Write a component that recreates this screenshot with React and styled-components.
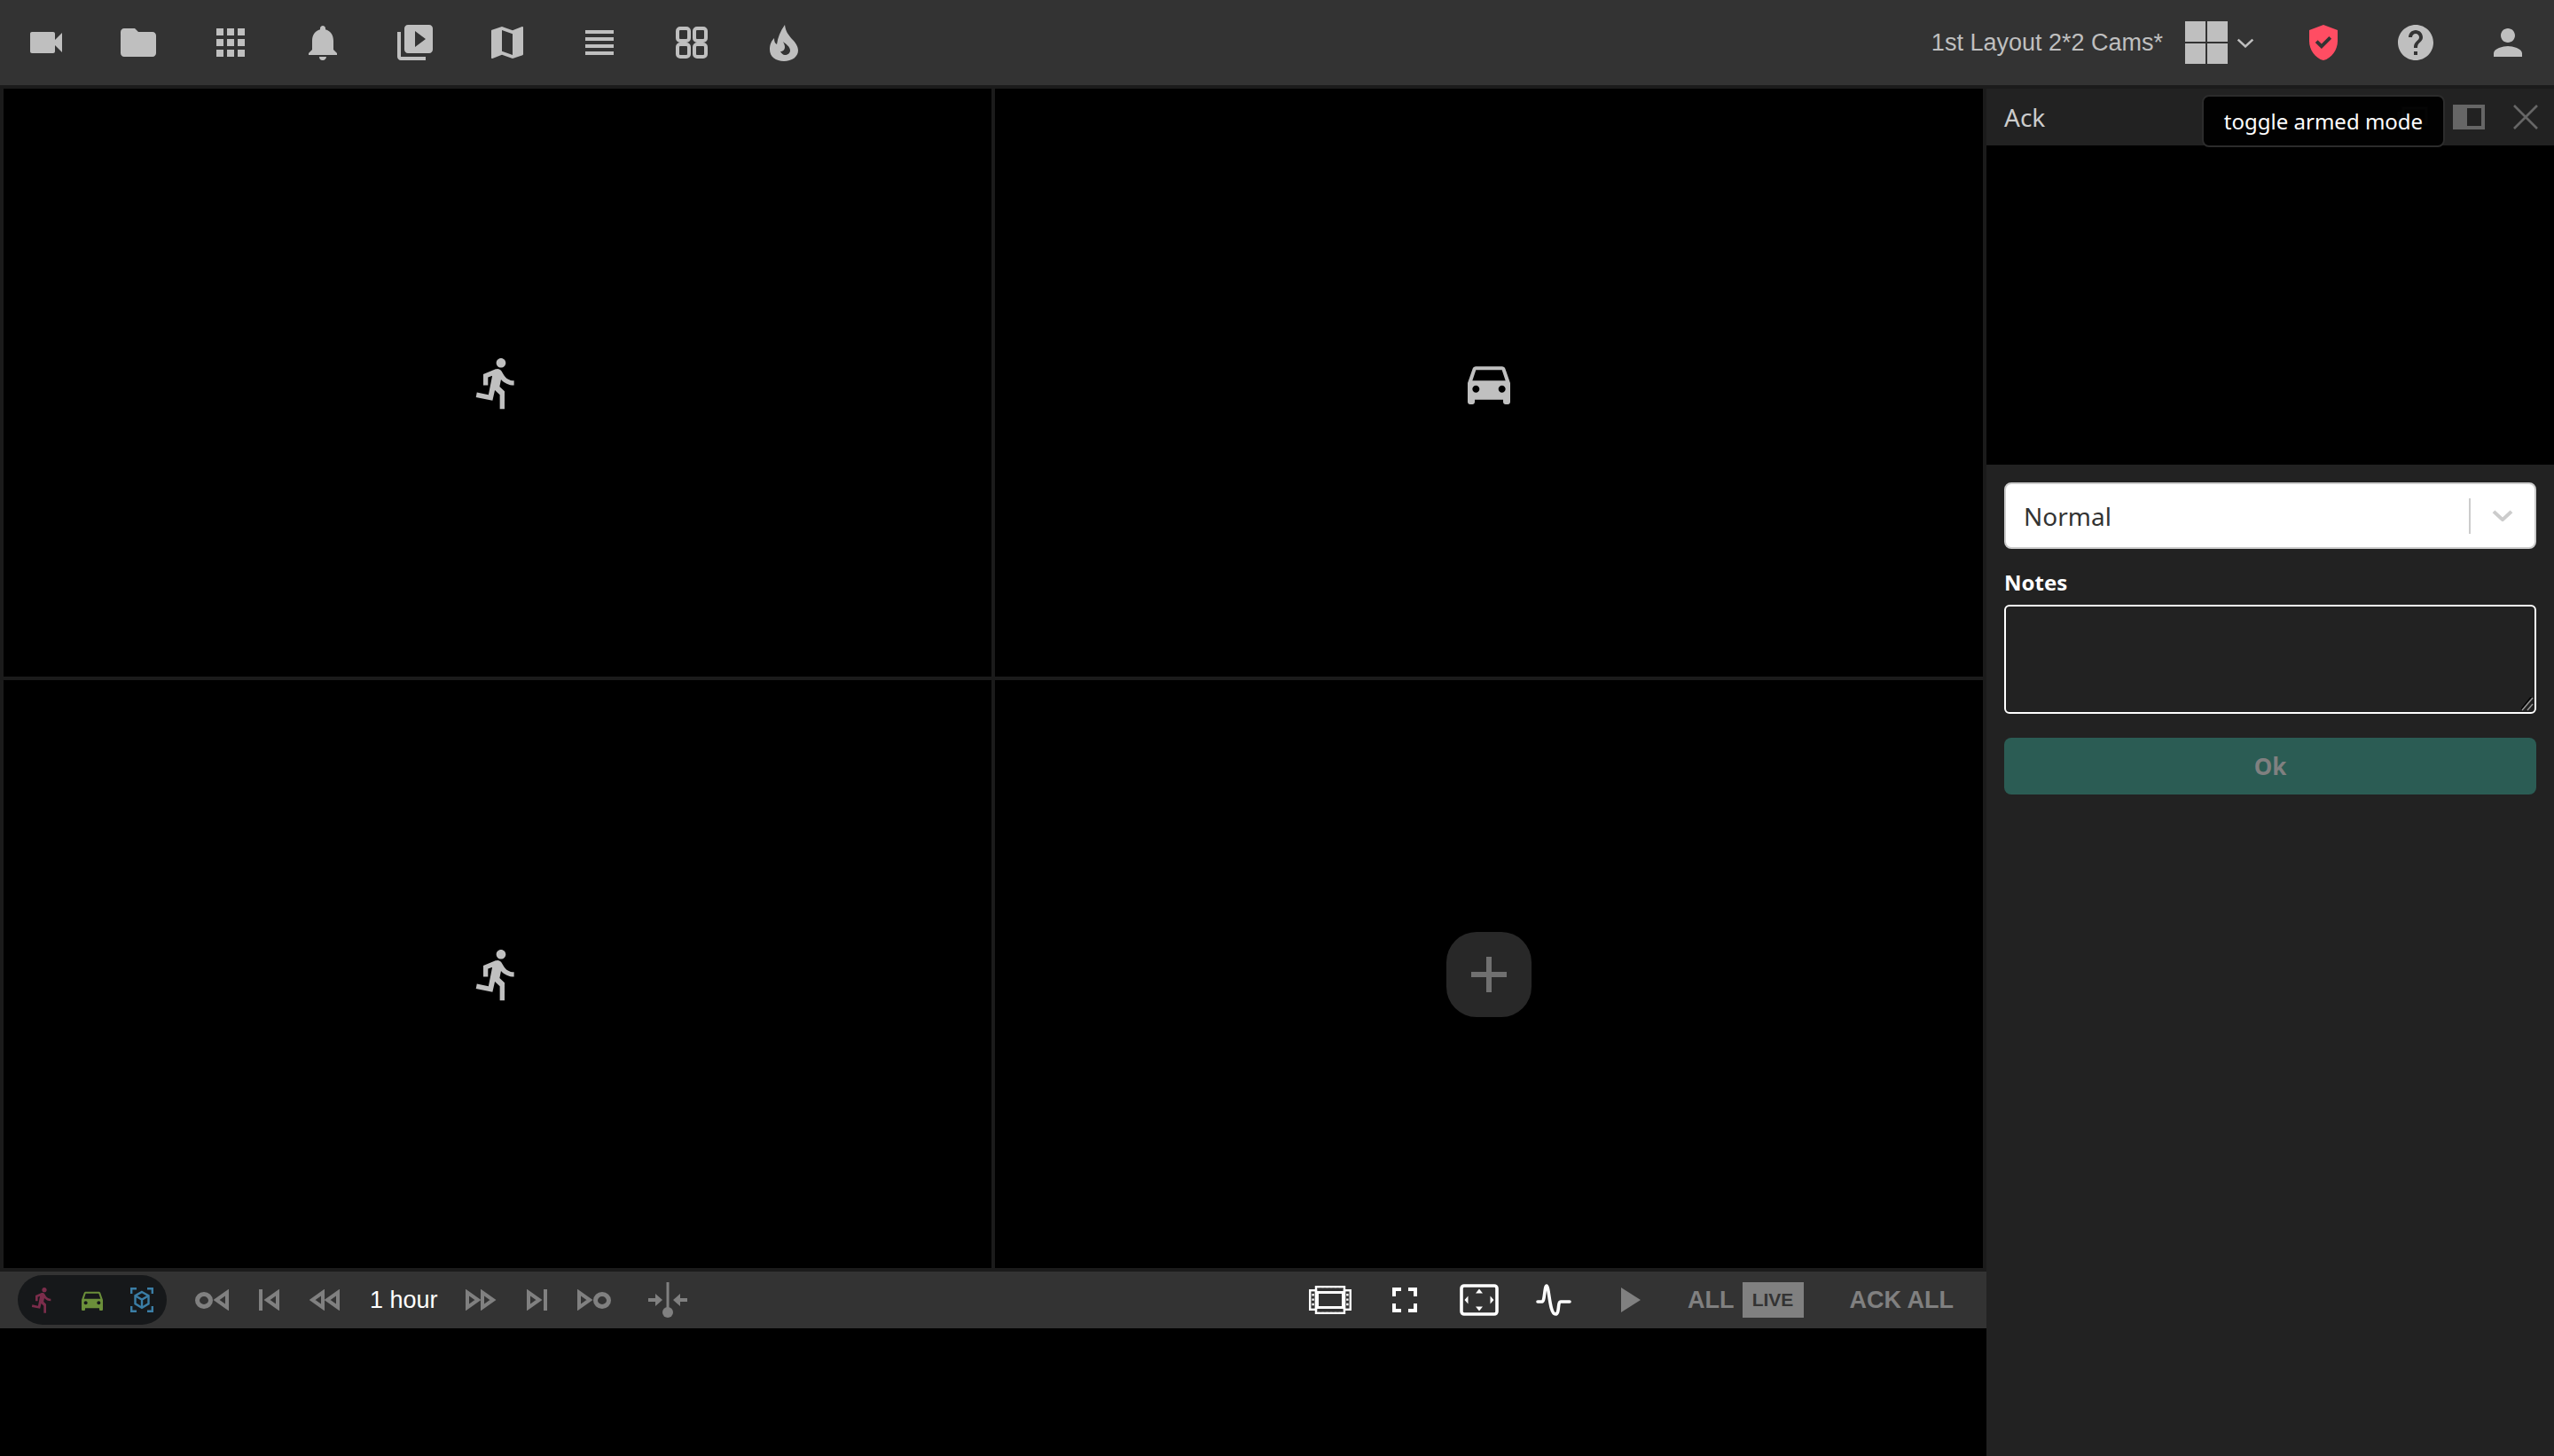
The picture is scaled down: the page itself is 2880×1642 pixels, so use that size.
import React from "react";
import styled, { createGlobalStyle } from "styled-components";
import {
  MdVideocam, MdFolder, MdApps, MdNotifications, MdVideoLibrary, MdMap,
  MdViewHeadline, MdGppGood, MdHelp, MdPerson, MdDirectionsRun, MdDirectionsCar,
} from "react-icons/md";

const Global = createGlobalStyle`
  html, body { margin: 0; padding: 0; height: 100%; background: #000; }
  #root { height: 100vh; }
  * { box-sizing: border-box; }
`;

const Page = styled.div`
  height: 100vh; display: flex; flex-direction: column; overflow: hidden;
  font-family: "Liberation Sans", Arial, sans-serif;
`;
const Toolbar = styled.header`
  height: 96px; flex: none; display: flex; align-items: center; background: #333; color: #bfbfbf;
`;
const ToolSlot = styled.div`
  width: 104px; height: 96px; flex: none; display: flex; align-items: center; justify-content: center;
`;
const ToolRight = styled.div`
  margin-left: auto; display: flex; align-items: center;
`;
const LayoutName = styled.span`
  font-size: 27px; color: #bfbfbf; white-space: nowrap; margin-right: 25px;
`;
const LayoutGlyph = styled.div`
  width: 48px; height: 48px; display: grid; gap: 2px; grid-template-columns: 1fr 1fr; grid-template-rows: 1fr 1fr;
  span { background: #bfbfbf; }
`;
const Caret = styled.svg`
  margin: 0 26px 0 10px; display: block; color: #bfbfbf;
`;
const Main = styled.div`
  flex: 1; min-height: 0; display: flex; padding-top: 4px; background: #1b1b1b;
`;
const Workspace = styled.div`
  width: 2240px; flex: none; display: flex; flex-direction: column; background: #000;
`;
const CameraGrid = styled.div`
  height: 1334px; flex: none; display: grid; grid-template-columns: 1fr 1fr; grid-template-rows: 1fr 1fr;
  gap: 4px; padding: 0 4px 4px; background: #1b1b1b;
`;
const Cell = styled.div`
  background: #000; color: #c0c0c0; display: flex; align-items: center; justify-content: center;
`;
const AddButton = styled.div`
  width: 96px; height: 96px; border-radius: 34px; background: #282828; color: #707070;
  display: flex; align-items: center; justify-content: center;
`;
const ControlBar = styled.div`
  height: 64px; flex: none; background: #333; display: flex; align-items: center; padding: 0 37px 0 20px; color: #808080;
`;
const FilterPill = styled.div`
  width: 168px; height: 56px; border-radius: 28px; background: #16181a; display: flex; align-items: center; flex: none;
`;
const FilterSlot = styled.div`
  width: 56px; display: flex; align-items: center; justify-content: center; color: ${p => p.$color};
`;
const Transport = styled.div`
  display: flex; align-items: center; gap: 34px; margin-left: 32px;
`;
const HourLabel = styled.span`
  color: #fff; font-size: 27px; white-space: nowrap; margin-right: -3px;
`;
const SyncSlot = styled.div`
  margin-left: 8px; display: flex;
`;
const Actions = styled.div`
  margin-left: auto; display: flex; align-items: center;
`;
const ActionItem = styled.div`
  margin-left: ${p => p.$gap}px; color: ${p => p.$color || "#808080"}; display: flex; align-items: center;
`;
const BoldLabel = styled.span`
  font-size: 27px; font-weight: 700; color: #808080; white-space: nowrap;
`;
const LiveBadge = styled.span`
  width: 69px; height: 40px; margin-left: 9px; background: #808080; color: #333; font-size: 21px; font-weight: 700;
  display: flex; align-items: center; justify-content: center;
`;
const Fill = styled.div`
  flex: 1; background: #000;
`;
const SidePanel = styled.aside`
  width: 640px; flex: none; background: #222; display: flex; flex-direction: column;
  font-family: "Noto Sans", sans-serif;
`;
const PanelHeader = styled.div`
  position: relative; height: 64px; flex: none; padding: 0 18px 0 20px; display: flex; align-items: center; color: #666;
`;
const PanelTitle = styled.span`
  font-size: 28px; color: #ccc; margin-right: auto;
`;
const HeaderIcon = styled.svg`
  display: block; margin-left: ${p => p.$gap}px; flex: none;
`;
const Tooltip = styled.div`
  position: absolute; left: 243px; top: 7px; width: 274px; height: 59px; border-radius: 8px;
  background: rgba(0, 0, 0, 0.95); border: 2px solid #2c2c2c; color: #fff; font-size: 24px;
  display: flex; align-items: center; justify-content: center; white-space: nowrap;
`;
const PreviewArea = styled.div`
  height: 360px; flex: none; background: #000;
`;
const Form = styled.div`
  padding: 20px 20px 0; display: flex; flex-direction: column;
`;
const SelectBox = styled.div`
  height: 75px; background: #fff; border: 2px solid #ccc; border-radius: 8px; display: flex; align-items: center;
  padding-left: 20px; color: #333; font-size: 28px;
`;
const SelectValue = styled.span`
  flex: 1;
`;
const SelectDivider = styled.span`
  width: 2px; height: 40px; background: #ccc;
`;
const SelectCaret = styled.svg`
  margin: 0 24px; display: block; color: #ccc;
`;
const FieldLabel = styled.label`
  margin-top: 18px; color: #fff; font-size: 24px; font-weight: 700; line-height: 39px; height: 45px;
`;
const NotesWrap = styled.div`
  position: relative; height: 123px;
`;
const NotesInput = styled.textarea`
  display: block; width: 100%; height: 100%; background: #222; border: 2px solid #fff; border-radius: 6px; outline: none; color: #fff;
  font-family: inherit; resize: none; padding: 8px;
`;
const ResizeGrip = styled.svg`
  position: absolute; right: 3px; bottom: 3px; display: block;
`;
const OkButton = styled.button`
  margin-top: 27px; height: 64px; border: 0; border-radius: 8px; background: #2b5c54; color: #808080;
  font-family: inherit; font-size: 26px; font-weight: 700; display: flex; align-items: center; justify-content: center;
`;
const Glyph = styled.svg`
  display: block; flex: none;
`;

const RoundMark = () => (
  <Glyph width="38" height="24" viewBox="0 0 38 24" fill="none" stroke="currentColor">
    <ellipse cx="10" cy="12.5" rx="7.5" ry="7" strokeWidth="5" />
    <path d="M36 3.5V20.5L24 12Z" strokeWidth="4" />
  </Glyph>
);
const BarPrev = () => (
  <Glyph width="23" height="24" viewBox="0 0 23 24" fill="none" stroke="currentColor">
    <path d="M2 0V24" strokeWidth="4" />
    <path d="M21 3.5V20.5L9 12Z" strokeWidth="4" />
  </Glyph>
);
const DoublePrev = () => (
  <Glyph width="34" height="24" viewBox="0 0 34 24" fill="none" stroke="currentColor" strokeWidth="4">
    <path d="M15 3.5V20.5L3 12Z" />
    <path d="M32 3.5V20.5L20 12Z" />
  </Glyph>
);
const DoubleNext = () => (
  <Glyph width="35" height="24" viewBox="0 0 35 24" fill="none" stroke="currentColor" strokeWidth="4">
    <path d="M2 3.5V20.5L14 12Z" />
    <path d="M19 3.5V20.5L31 12Z" />
  </Glyph>
);
const BarNext = () => (
  <Glyph width="23" height="24" viewBox="0 0 23 24" fill="none" stroke="currentColor">
    <path d="M2 3.5V20.5L14 12Z" strokeWidth="4" />
    <path d="M21 0V24" strokeWidth="4" />
  </Glyph>
);
const NextRound = () => (
  <Glyph width="38" height="24" viewBox="0 0 38 24" fill="none" stroke="currentColor">
    <path d="M2 3.5V20.5L14 12Z" strokeWidth="4" />
    <ellipse cx="28" cy="12.5" rx="7.5" ry="7" strokeWidth="5" />
  </Glyph>
);
const SyncMark = () => (
  <Glyph width="44" height="40" viewBox="0 0 44 40" fill="currentColor">
    <rect x="20.5" y="0" width="3" height="34" />
    <circle cx="22" cy="34" r="6" />
    <path d="M0 18H8V13L16 20L8 27V22H0Z" />
    <path d="M44 18H36V13L28 20L36 27V22H44Z" />
  </Glyph>
);
const CubeMark = () => (
  <Glyph width="26" height="28" viewBox="0 0 26 28" fill="none" stroke="currentColor" strokeWidth="2.4">
    <path d="M1.2 7V1.2H7M19 1.2H24.8V7M24.8 21V26.8H19M7 26.8H1.2V21" />
    <path d="M13 5L20.5 9.2V18.4L13 22.8L5.5 18.4V9.2Z" />
    <path d="M5.5 9.2L13 13.6L20.5 9.2M13 13.6V22.8" />
  </Glyph>
);
const FilmMark = () => (
  <Glyph width="48" height="32" viewBox="0 0 48 32" fill="none" stroke="#fff">
    <rect x="8" y="1.2" width="32" height="29.6" strokeWidth="2.4" />
    <rect x="9.5" y="7.5" width="29" height="17" strokeWidth="3" />
    <rect x="1.2" y="5.2" width="6.8" height="21.6" strokeWidth="2.4" />
    <rect x="40" y="5.2" width="6.8" height="21.6" strokeWidth="2.4" />
    <path d="M12 4H36M12 28H36" strokeWidth="2.4" strokeDasharray="2.4 2.4" stroke="#333" />
    <path d="M4.6 9V23M43.4 9V23" strokeWidth="2.4" strokeDasharray="2.4 3" stroke="#fff" />
  </Glyph>
);
const FullscreenMark = () => (
  <Glyph width="28" height="28" viewBox="0 0 28 28" fill="none" stroke="#fff" strokeWidth="4">
    <path d="M2 10V2H10M18 2H26V10M26 18V26H18M10 26H2V18" />
  </Glyph>
);
const AspectMark = () => (
  <Glyph width="44" height="36" viewBox="0 0 44 36" fill="#fff">
    <rect x="2" y="2" width="40" height="32" rx="3" fill="none" stroke="#fff" strokeWidth="3.6" />
    <path d="M22 5.5L26 10.500H18ZM22 30.5L18 25.5H26ZM5.5 18L9.500 13.500V22.500ZM38.500 18L34.500 22.500V13.500Z" />
  </Glyph>
);
const PulseMark = () => (
  <Glyph width="40" height="36" viewBox="0 0 40 36" fill="none" stroke="#fff" strokeWidth="3.6" strokeLinecap="round" strokeLinejoin="round">
    <path d="M2 20H7C10 20 9.500 2 12 2C15 2 15 34 22 34C27 34 24 20 28 20H38" />
  </Glyph>
);
const PlayMark = () => (
  <Glyph width="22" height="28" viewBox="0 0 22 28" fill="currentColor">
    <path d="M0 0L22 14L0 28Z" />
  </Glyph>
);
const FlameMark = () => (
  <Glyph width="32" height="41" viewBox="0 0 32 41" fill="currentColor" fillRule="evenodd">
    <path d="M17 0C18 8 21 11 25 16C30 21 32 25 32 29C32 36 25 41 16 41C7 41 0 36 0 28C0 22 2 18 5 15C5 19 6 21 8 22C9 14 12 7 17 0ZM15 19C19 22 23 25 23 29C23 32 20 34 17 34C15 34 13 32 12 30C15 30 17 28 17 25C17 23 16 21 15 19Z" />
  </Glyph>
);
const DownCaret = ({ as: Comp, width, height, strokeWidth }) => (
  <Comp width={width} height={height} viewBox="0 0 24 14" fill="none" stroke="currentColor" strokeWidth={strokeWidth} preserveAspectRatio="none">
    <path d="M2 2L12 12L22 2" />
  </Comp>
);

export default function App() {
  const tools = [MdVideocam, MdFolder, MdApps, MdNotifications, MdVideoLibrary, MdMap, MdViewHeadline];
  return (
    <Page>
      <Global />
      <Toolbar>
        {tools.map((Icon, i) => (
          <ToolSlot key={i}><Icon size={48} /></ToolSlot>
        ))}
        <ToolSlot>
          <Glyph width="36" height="36" viewBox="0 0 36 36" fill="none" stroke="currentColor" strokeWidth="4">
            <rect x="2" y="2" width="13" height="14" rx="3" />
            <rect x="21" y="2" width="13" height="14" rx="3" />
            <rect x="2" y="20" width="13" height="14" rx="3" />
            <rect x="21" y="20" width="13" height="14" rx="3" />
          </Glyph>
        </ToolSlot>
        <ToolSlot><FlameMark /></ToolSlot>
        <ToolRight>
          <LayoutName>1st Layout 2*2 Cams*</LayoutName>
          <LayoutGlyph><span /><span /><span /><span /></LayoutGlyph>
          <DownCaret as={Caret} width="20" height="11" strokeWidth="3" />
          <ToolSlot><MdGppGood size={48} color="#ff4d63" /></ToolSlot>
          <ToolSlot><MdHelp size={48} /></ToolSlot>
          <ToolSlot><MdPerson size={48} /></ToolSlot>
        </ToolRight>
      </Toolbar>
      <Main>
        <Workspace>
          <CameraGrid>
            <Cell><MdDirectionsRun size={64} /></Cell>
            <Cell><MdDirectionsCar size={64} /></Cell>
            <Cell><MdDirectionsRun size={64} /></Cell>
            <Cell>
              <AddButton>
                <Glyph width="40" height="40" viewBox="0 0 40 40" fill="currentColor">
                  <path d="M17 0H23V17H40V23H23V40H17V23H0V17H17Z" />
                </Glyph>
              </AddButton>
            </Cell>
          </CameraGrid>
          <ControlBar>
            <FilterPill>
              <FilterSlot $color="#7b2d4b"><MdDirectionsRun size={32} /></FilterSlot>
              <FilterSlot $color="#6b8f3a"><MdDirectionsCar size={32} /></FilterSlot>
              <FilterSlot $color="#3b7ea6"><CubeMark /></FilterSlot>
            </FilterPill>
            <Transport>
              <RoundMark />
              <BarPrev />
              <DoublePrev />
              <HourLabel>1 hour</HourLabel>
              <DoubleNext />
              <BarNext />
              <NextRound />
              <SyncSlot><SyncMark /></SyncSlot>
            </Transport>
            <Actions>
              <ActionItem $gap={0}><FilmMark /></ActionItem>
              <ActionItem $gap={46}><FullscreenMark /></ActionItem>
              <ActionItem $gap={48}><AspectMark /></ActionItem>
              <ActionItem $gap={42}><PulseMark /></ActionItem>
              <ActionItem $gap={56}><PlayMark /></ActionItem>
              <ActionItem $gap={53}><BoldLabel>ALL</BoldLabel><LiveBadge>LIVE</LiveBadge></ActionItem>
              <ActionItem $gap={52}><BoldLabel>ACK ALL</BoldLabel></ActionItem>
            </Actions>
          </ControlBar>
          <Fill />
        </Workspace>
        <SidePanel>
          <PanelHeader>
            <PanelTitle>Ack</PanelTitle>
            <HeaderIcon $gap={0} width="36" height="24" viewBox="0 0 36 24" fill="none" stroke="currentColor" strokeWidth="3">
              <rect x="8" y="2" width="26" height="18" />
              <path d="M3 6V22H24" />
            </HeaderIcon>
            <HeaderIcon $gap={28} width="36" height="28" viewBox="0 0 36 28" fill="none" stroke="currentColor">
              <rect x="2" y="2" width="32" height="24" strokeWidth="4" />
              <rect x="2" y="2" width="12" height="24" fill="currentColor" strokeWidth="4" />
            </HeaderIcon>
            <HeaderIcon $gap={32} width="28" height="28" viewBox="0 0 28 28" fill="none" stroke="currentColor" strokeWidth="2.6">
              <path d="M1 1L27 27M27 1L1 27" />
            </HeaderIcon>
            <Tooltip>toggle armed mode</Tooltip>
          </PanelHeader>
          <PreviewArea />
          <Form>
            <SelectBox>
              <SelectValue>Normal</SelectValue>
              <SelectDivider />
              <DownCaret as={SelectCaret} width="24" height="13" strokeWidth="4" />
            </SelectBox>
            <FieldLabel>Notes</FieldLabel>
            <NotesWrap>
              <NotesInput readOnly />
              <ResizeGrip width="14" height="16" viewBox="0 0 14 16" fill="none" strokeWidth="1.4">
                <path d="M0 16L13 0" stroke="#000" transform="translate(-1 -1)" />
                <path d="M1 15L13 1" stroke="#999" />
                <path d="M7 15L13 8" stroke="#999" />
              </ResizeGrip>
            </NotesWrap>
            <OkButton disabled>Ok</OkButton>
          </Form>
        </SidePanel>
      </Main>
    </Page>
  );
}
